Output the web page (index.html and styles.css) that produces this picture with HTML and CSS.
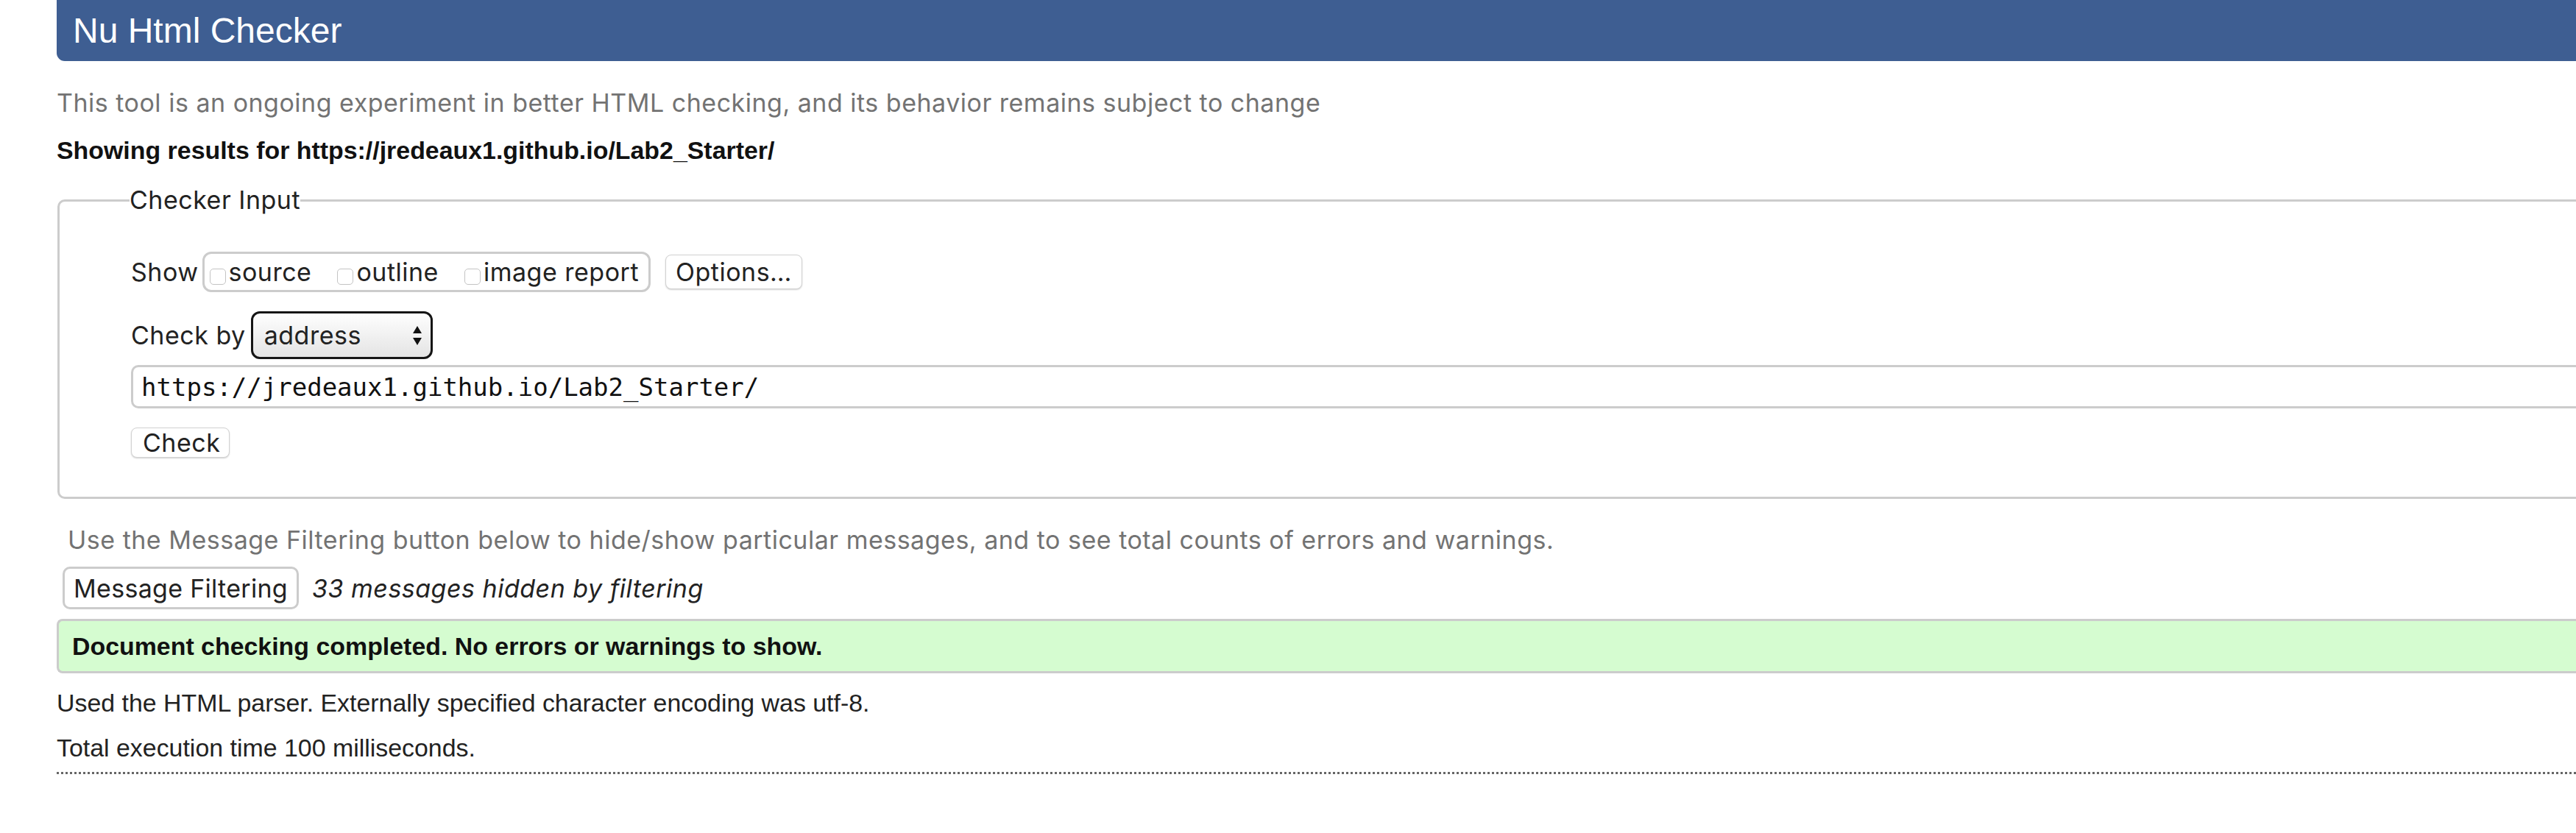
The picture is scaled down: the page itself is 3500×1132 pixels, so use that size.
FILE: index.html
```html
<!DOCTYPE html>
<html lang="en">
<head>
<meta charset="utf-8">
<title>Nu Html Checker</title>
<link rel="stylesheet" href="styles.css">
</head>
<body>
<div class="page">
  <h1 class="title">Nu Html Checker</h1>
  <p class="about">This tool is an ongoing experiment in better HTML checking, and its behavior remains subject to change</p>
  <p class="showing">Showing results for https://jredeaux1.github.io/Lab2_Starter/</p>
  <fieldset class="checker">
    <legend class="legend">Checker Input</legend>
    <div class="row row-show">
      <span class="label">Show</span>
      <span class="group">
        <label class="opt"><span class="cb"></span>source</label>
        <label class="opt"><span class="cb"></span>outline</label>
        <label class="opt"><span class="cb"></span>image report</label>
      </span>
      <button class="btn btn-options" type="button">Options…</button>
    </div>
    <div class="row row-by">
      <span class="label">Check by</span>
      <span class="select">address<svg class="arrows" width="12" height="26" viewBox="0 0 12 26"><polygon points="0,10 6,0 12,10" fill="#111"/><polygon points="0,16 12,16 6,26" fill="#111"/></svg></span>
    </div>
    <div class="url">https://jredeaux1.github.io/Lab2_Starter/</div>
    <div class="row row-check">
      <button class="btn btn-check" type="button">Check</button>
    </div>
  </fieldset>
  <p class="hint">Use the Message Filtering button below to hide/show particular messages, and to see total counts of errors and warnings.</p>
  <div class="filter-row">
    <button class="btn-filter" type="button">Message Filtering</button>
    <em class="hidden-count">33 messages hidden by filtering</em>
  </div>
  <div class="success">Document checking completed. No errors or warnings to show.</div>
  <p class="stat stat-parser">Used the HTML parser. Externally specified character encoding was utf-8.</p>
  <p class="stat stat-time">Total execution time 100 milliseconds.</p>
  <div class="dots"></div>
</div>
</body>
</html>
```

FILE: styles.css
```css
html, body {
  margin: 0;
  padding: 0;
  background: #fff;
  overflow: hidden;
}
body {
  font-family: "Liberation Sans", Arial, sans-serif;
  font-size: 33.9px;
  color: #1d1d1f;
}
.page {
  margin-left: 77px;
  margin-right: -60px;
}
.title {
  margin: 0;
  height: 83px;
  line-height: 83px;
  padding-left: 22px;
  background: #3e5e92;
  color: #fff;
  font-weight: normal;
  font-size: 48px;
  border-radius: 0 0 0 11px;
}
.about {
  margin: 37px 0 0 0;
  line-height: 40px;
  font-family: Inter, "Noto Sans", sans-serif;
  font-size: 34px;
  letter-spacing: 0.5px;
  color: #737373;
}
.showing {
  margin: 24px 0 0 0;
  line-height: 40px;
  font-weight: bold;
  color: #111;
}
.checker {
  margin: 28px 0 0 1px;
  padding: 50px 0 53px 97px;
  border: 3px solid #cccccc;
  border-radius: 10px 0 0 10px;
  min-width: 0;
  font-family: Inter, "Noto Sans", sans-serif;
  font-size: 34px;
  letter-spacing: 0.5px;
  color: #222;
}
.legend {
  padding: 0;
  margin-left: -2px;
  line-height: 40px;
}
.row {
  display: flex;
  align-items: center;
}
.row-show {
  height: 55px;
}
.label {
  margin-right: 5px;
}
.group {
  box-sizing: border-box;
  height: 55px;
  display: flex;
  align-items: center;
  gap: 35px;
  padding: 0 13px 0 7px;
  border: 3px solid #cccccc;
  border-radius: 12px;
}
.opt {
  display: inline-flex;
  align-items: center;
}
.cb {
  box-sizing: border-box;
  width: 22px;
  height: 22px;
  margin: 12px 4px 0 0;
  border: 1.5px solid #c4c4c4;
  border-radius: 5px;
  background: #fff;
}
.btn {
  box-sizing: border-box;
  font-family: Inter, "Noto Sans", sans-serif;
  font-size: 34px;
  letter-spacing: 0.5px;
  color: #222;
  background: #fff;
  border: 1px solid #d2d2d2;
  border-radius: 8px;
  box-shadow: 0 1px 2px rgba(0, 0, 0, 0.18);
  padding: 0 15px;
  line-height: 1;
}
.btn-options {
  margin-left: 20px;
  height: 47px;
  width: 186px;
  padding: 0 10px;
}
.row-by {
  margin-top: 26px;
  height: 65px;
}
.select {
  box-sizing: border-box;
  width: 247px;
  height: 65px;
  display: flex;
  align-items: center;
  justify-content: space-between;
  padding: 0 12px 0 15px;
  border: 3px solid #151515;
  border-radius: 12px;
  background: linear-gradient(#fefefe, #e4e4e4);
}
.row-by .label {
  margin-right: 7px;
}
.arrows {
  display: block;
}
.url {
  box-sizing: border-box;
  margin-top: 8px;
  height: 59px;
  display: flex;
  align-items: center;
  padding-left: 11px;
  border: 3px solid #cccccc;
  border-right: 0;
  border-radius: 10px 0 0 10px;
  font-family: "DejaVu Sans Mono", "Liberation Mono", monospace;
  font-size: 34px;
  letter-spacing: 0;
  color: #111;
}
.row-check {
  margin-top: 26px;
}
.btn-check {
  height: 41px;
  width: 134px;
}
.hint {
  margin: 36px 0 0 15px;
  line-height: 40px;
  font-family: Inter, "Noto Sans", sans-serif;
  font-size: 34px;
  letter-spacing: 0.5px;
  color: #737373;
}
.filter-row {
  margin: 16px 0 0 8px;
  display: flex;
  align-items: center;
  height: 58px;
}
.btn-filter {
  box-sizing: border-box;
  height: 58px;
  width: 321px;
  padding: 0 0 0 12px;
  text-align: left;
  font-family: Inter, "Noto Sans", sans-serif;
  font-size: 34px;
  letter-spacing: 0.3px;
  color: #222;
  background: #fff;
  border: 3px solid #cccccc;
  border-radius: 10px;
}
.hidden-count {
  margin-left: 18px;
  font-family: Inter, "Noto Sans", sans-serif;
  font-size: 34px;
  letter-spacing: 0.5px;
  font-style: italic;
  color: #222;
}
.success {
  box-sizing: border-box;
  margin-top: 13px;
  height: 74px;
  line-height: 68px;
  padding-left: 18px;
  background: #d5fcd0;
  border: 3px solid #cccccc;
  border-right: 0;
  border-radius: 8px 0 0 8px;
  font-weight: bold;
  color: #111;
}
.stat {
  margin: 0;
  line-height: 40px;
  color: #222;
}
.stat-parser {
  margin-top: 20px;
}
.stat-time {
  margin-top: 21px;
}
.dots {
  margin-top: 13px;
  border-top: 3px dotted #666;
}
```
